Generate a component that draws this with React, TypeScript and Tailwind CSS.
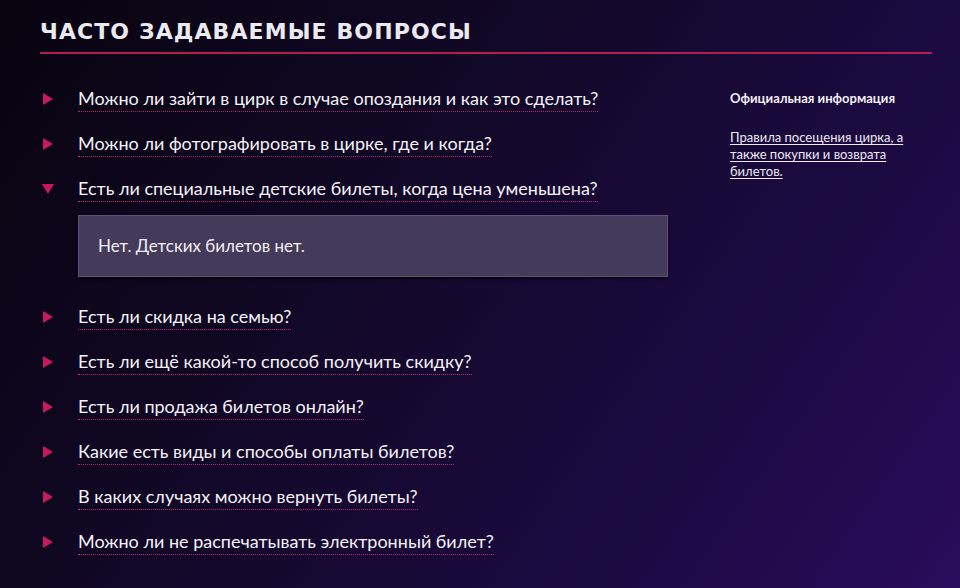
import React, { useState } from 'react';

const questions = [
  { q: 'Можно ли зайти в цирк в случае опоздания и как это сделать?' },
  { q: 'Можно ли фотографировать в цирке, где и когда?' },
  { q: 'Есть ли специальные детские билеты, когда цена уменьшена?', a: 'Нет. Детских билетов нет.' },
  { q: 'Есть ли скидка на семью?' },
  { q: 'Есть ли ещё какой-то способ получить скидку?' },
  { q: 'Есть ли продажа билетов онлайн?' },
  { q: 'Какие есть виды и способы оплаты билетов?' },
  { q: 'В каких случаях можно вернуть билеты?' },
  { q: 'Можно ли не распечатывать электронный билет?' },
];

const Arrow = ({ open }: { open: boolean }) => (
  <svg width="12" height="12" viewBox="0 0 12 12" className="shrink-0">
    {open ? <polygon points="0,1 12,1 6,11" fill="#c8195c" /> : <polygon points="1,0 11,6 1,12" fill="#c8195c" />}
  </svg>
);

export default function App() {
  const [open, setOpen] = useState(2);

  return (
    <div
      className="w-[960px] h-[588px] overflow-hidden bg-[linear-gradient(125deg,#08040f_0%,#120828_40%,#1d0a44_75%,#2a0c5c_100%)] text-white px-10 pt-[18px]"
      style={{ fontFamily: 'Lato, "Noto Sans", sans-serif' }}
    >
      <h2
        className="text-[22px] font-bold tracking-[0.05em] uppercase text-[#ebeaf0] leading-[28px] pb-[6px] border-b-2 border-[#b01f4e] w-[892px]"
        style={{ fontFamily: '"DejaVu Sans", Inter, sans-serif' }}
      >
        Часто задаваемые вопросы
      </h2>

      <div className="flex mt-[22px]">
        <div className="w-[690px] shrink-0 flex flex-col">
          {questions.map((item, i) => (
            <div key={i} className="flex flex-col">
              <button
                onClick={() => setOpen(open === i ? -1 : i)}
                className="flex items-center text-left h-[45px]"
              >
                <span className="w-[38px] pl-[2px] flex">
                  <Arrow open={open === i} />
                </span>
                <span className="text-[18px] leading-[24px] text-[#f4f2f7] border-b border-dotted border-[#c01f6a] pb-[1px]">
                  {item.q}
                </span>
              </button>
              {open === i && item.a && (
                <div className="ml-[38px] w-[590px] h-[62px] mt-[4px] mb-[17px] bg-[#443a59] border border-[#5d5473] shadow-[0_2px_2px_rgba(0,0,0,0.6)] flex items-center px-[19px] text-[17px] text-[#f2f0f5]">
                  {item.a}
                </div>
              )}
            </div>
          ))}
        </div>

        <div className="w-[190px] shrink-0 pt-[14px]">
          <div className="text-[13px] font-bold text-[#f2f0f5] leading-[17px]">Официальная информация</div>
          <a href="#" className="block mt-[22px] text-[13px] leading-[17px] text-[#ece9f2] underline underline-offset-2">
            Правила посещения цирка, а также покупки и возврата билетов.
          </a>
        </div>
      </div>
    </div>
  );
}
